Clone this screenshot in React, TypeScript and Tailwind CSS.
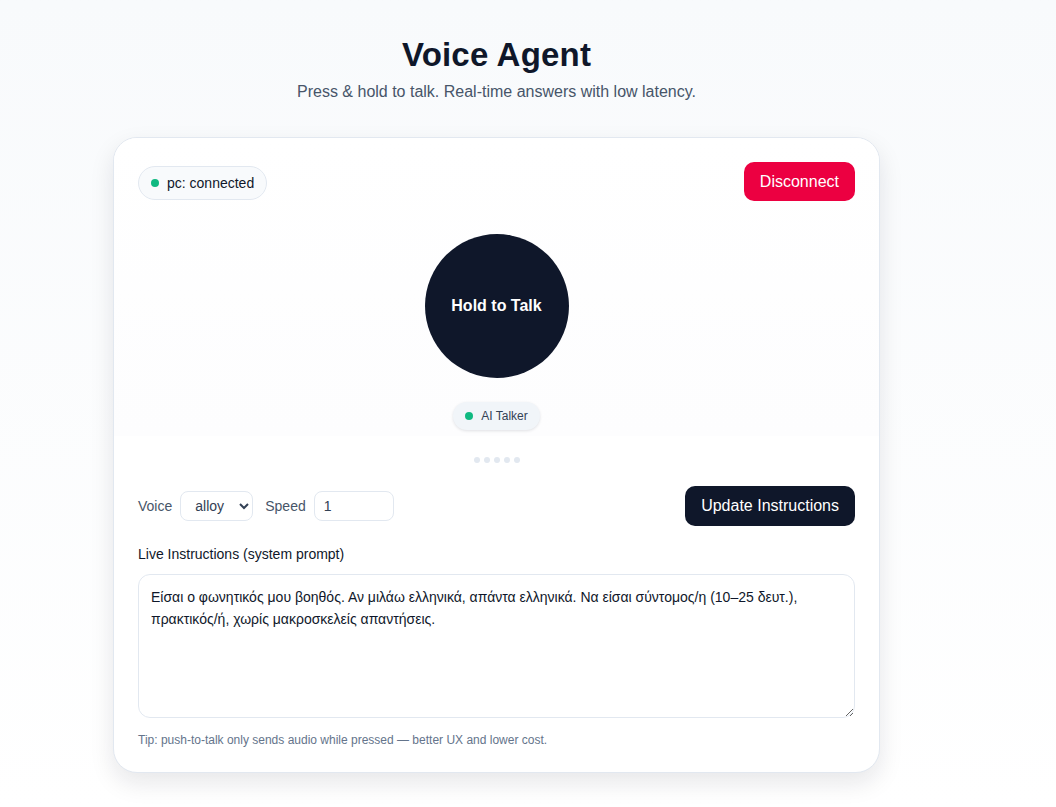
import { useState } from "react";

const FONT = { fontFamily: '"Liberation Sans", Arial, sans-serif' };

export default function App() {
  const [voice, setVoice] = useState("alloy");
  const [speed, setSpeed] = useState("1");
  const [prompt, setPrompt] = useState(
    "Είσαι ο φωνητικός μου βοηθός. Αν μιλάω ελληνικά, απάντα ελληνικά. Να είσαι σύντομος/η (10–25 δευτ.), πρακτικός/ή, χωρίς μακροσκελείς απαντήσεις."
  );

  return (
    <div
      className="min-h-screen bg-gradient-to-b from-[#f8fafc] to-white text-[#0f172a]"
      style={FONT}
    >
      <div className="ml-[113px] w-[767px] pt-[37px] pb-8">
        <h1 className="text-center text-[33px] leading-[36px] font-bold tracking-[0.2px] text-[#0f172a]">
          Voice Agent
        </h1>
        <p className="mt-[7px] text-center text-base text-[#475569]">
          Press &amp; hold to talk. Real-time answers with low latency.
        </p>

        <div className="mt-[33px] rounded-[24px] border border-[#e2e8f0] bg-white shadow-[0_10px_24px_rgba(15,23,42,0.10)] overflow-hidden">
          {/* stage */}
          <div className="bg-gradient-to-b from-white to-[#fdfdfe] px-6 pt-[27px] pb-[6px]">
            <div className="flex items-center justify-between">
              <div className="flex h-[34px] items-center gap-2 rounded-full border border-[#e2e8f0] bg-[#f8fafc] pl-3 pr-3 text-sm text-[#0f172a]">
                <span className="h-2 w-2 rounded-full bg-[#10b981]" />
                pc: connected
              </div>
              <button className="-mt-[3px] h-[39px] rounded-[10px] bg-[#ec0041] px-4 text-base text-white">
                Disconnect
              </button>
            </div>

            <div className="mt-[33px] flex flex-col items-center">
              <button className="grid h-[144px] w-[144px] place-items-center rounded-full bg-[#0f172a] text-base font-bold text-white select-none">
                Hold to Talk
              </button>
              <div className="mt-[24px] flex h-[28px] items-center gap-2 rounded-full bg-[#f1f5f9] px-3 text-xs text-[#334155] shadow-[0_1px_3px_rgba(15,23,42,0.12)]">
                <span className="h-2 w-2 rounded-full bg-[#10b981]" />
                AI Talker
              </div>
            </div>
          </div>

          <div className="px-6 pb-6">
            <div className="mt-[21px] flex justify-center gap-1">
              {[0, 1, 2, 3, 4].map((i) => (
                <span key={i} className="h-[6px] w-[6px] rounded-full bg-[#e2e8f0]" />
              ))}
            </div>

            <div className="mt-[23px] flex items-center justify-between">
              <div className="flex items-center gap-3 text-sm text-[#475569]">
                <label className="flex items-center gap-2">
                  Voice
                  <select
                    value={voice}
                    onChange={(e) => setVoice(e.target.value)}
                    className="h-[30px] w-[73px] rounded-lg border border-[#e2e8f0] bg-white pl-[10px] text-sm text-[#334155]"
                  >
                    <option value="alloy">alloy</option>
                    <option value="verse">verse</option>
                    <option value="sage">sage</option>
                  </select>
                </label>
                <label className="flex items-center gap-2">
                  Speed
                  <input
                    value={speed}
                    onChange={(e) => setSpeed(e.target.value)}
                    className="h-[30px] w-[80px] rounded-lg border border-[#e2e8f0] bg-white px-[9px] text-sm text-[#334155] outline-none"
                  />
                </label>
              </div>
              <button className="h-[40px] rounded-[10px] bg-[#0f172a] px-4 text-base text-white">
                Update Instructions
              </button>
            </div>

            <div className="mt-[18px] text-sm text-[#0f172a]">Live Instructions (system prompt)</div>
            <textarea
              value={prompt}
              onChange={(e) => setPrompt(e.target.value)}
              className="mt-[10px] block h-[144px] w-full resize-y rounded-xl border border-[#e2e8f0] bg-white px-3 py-[11px] text-sm leading-[22px] text-[#0f172a] outline-none"
            />
            <p className="mt-[14px] text-xs text-[#64748b]">
              Tip: push-to-talk only sends audio while pressed — better UX and lower cost.
            </p>
          </div>
        </div>
      </div>
    </div>
  );
}
